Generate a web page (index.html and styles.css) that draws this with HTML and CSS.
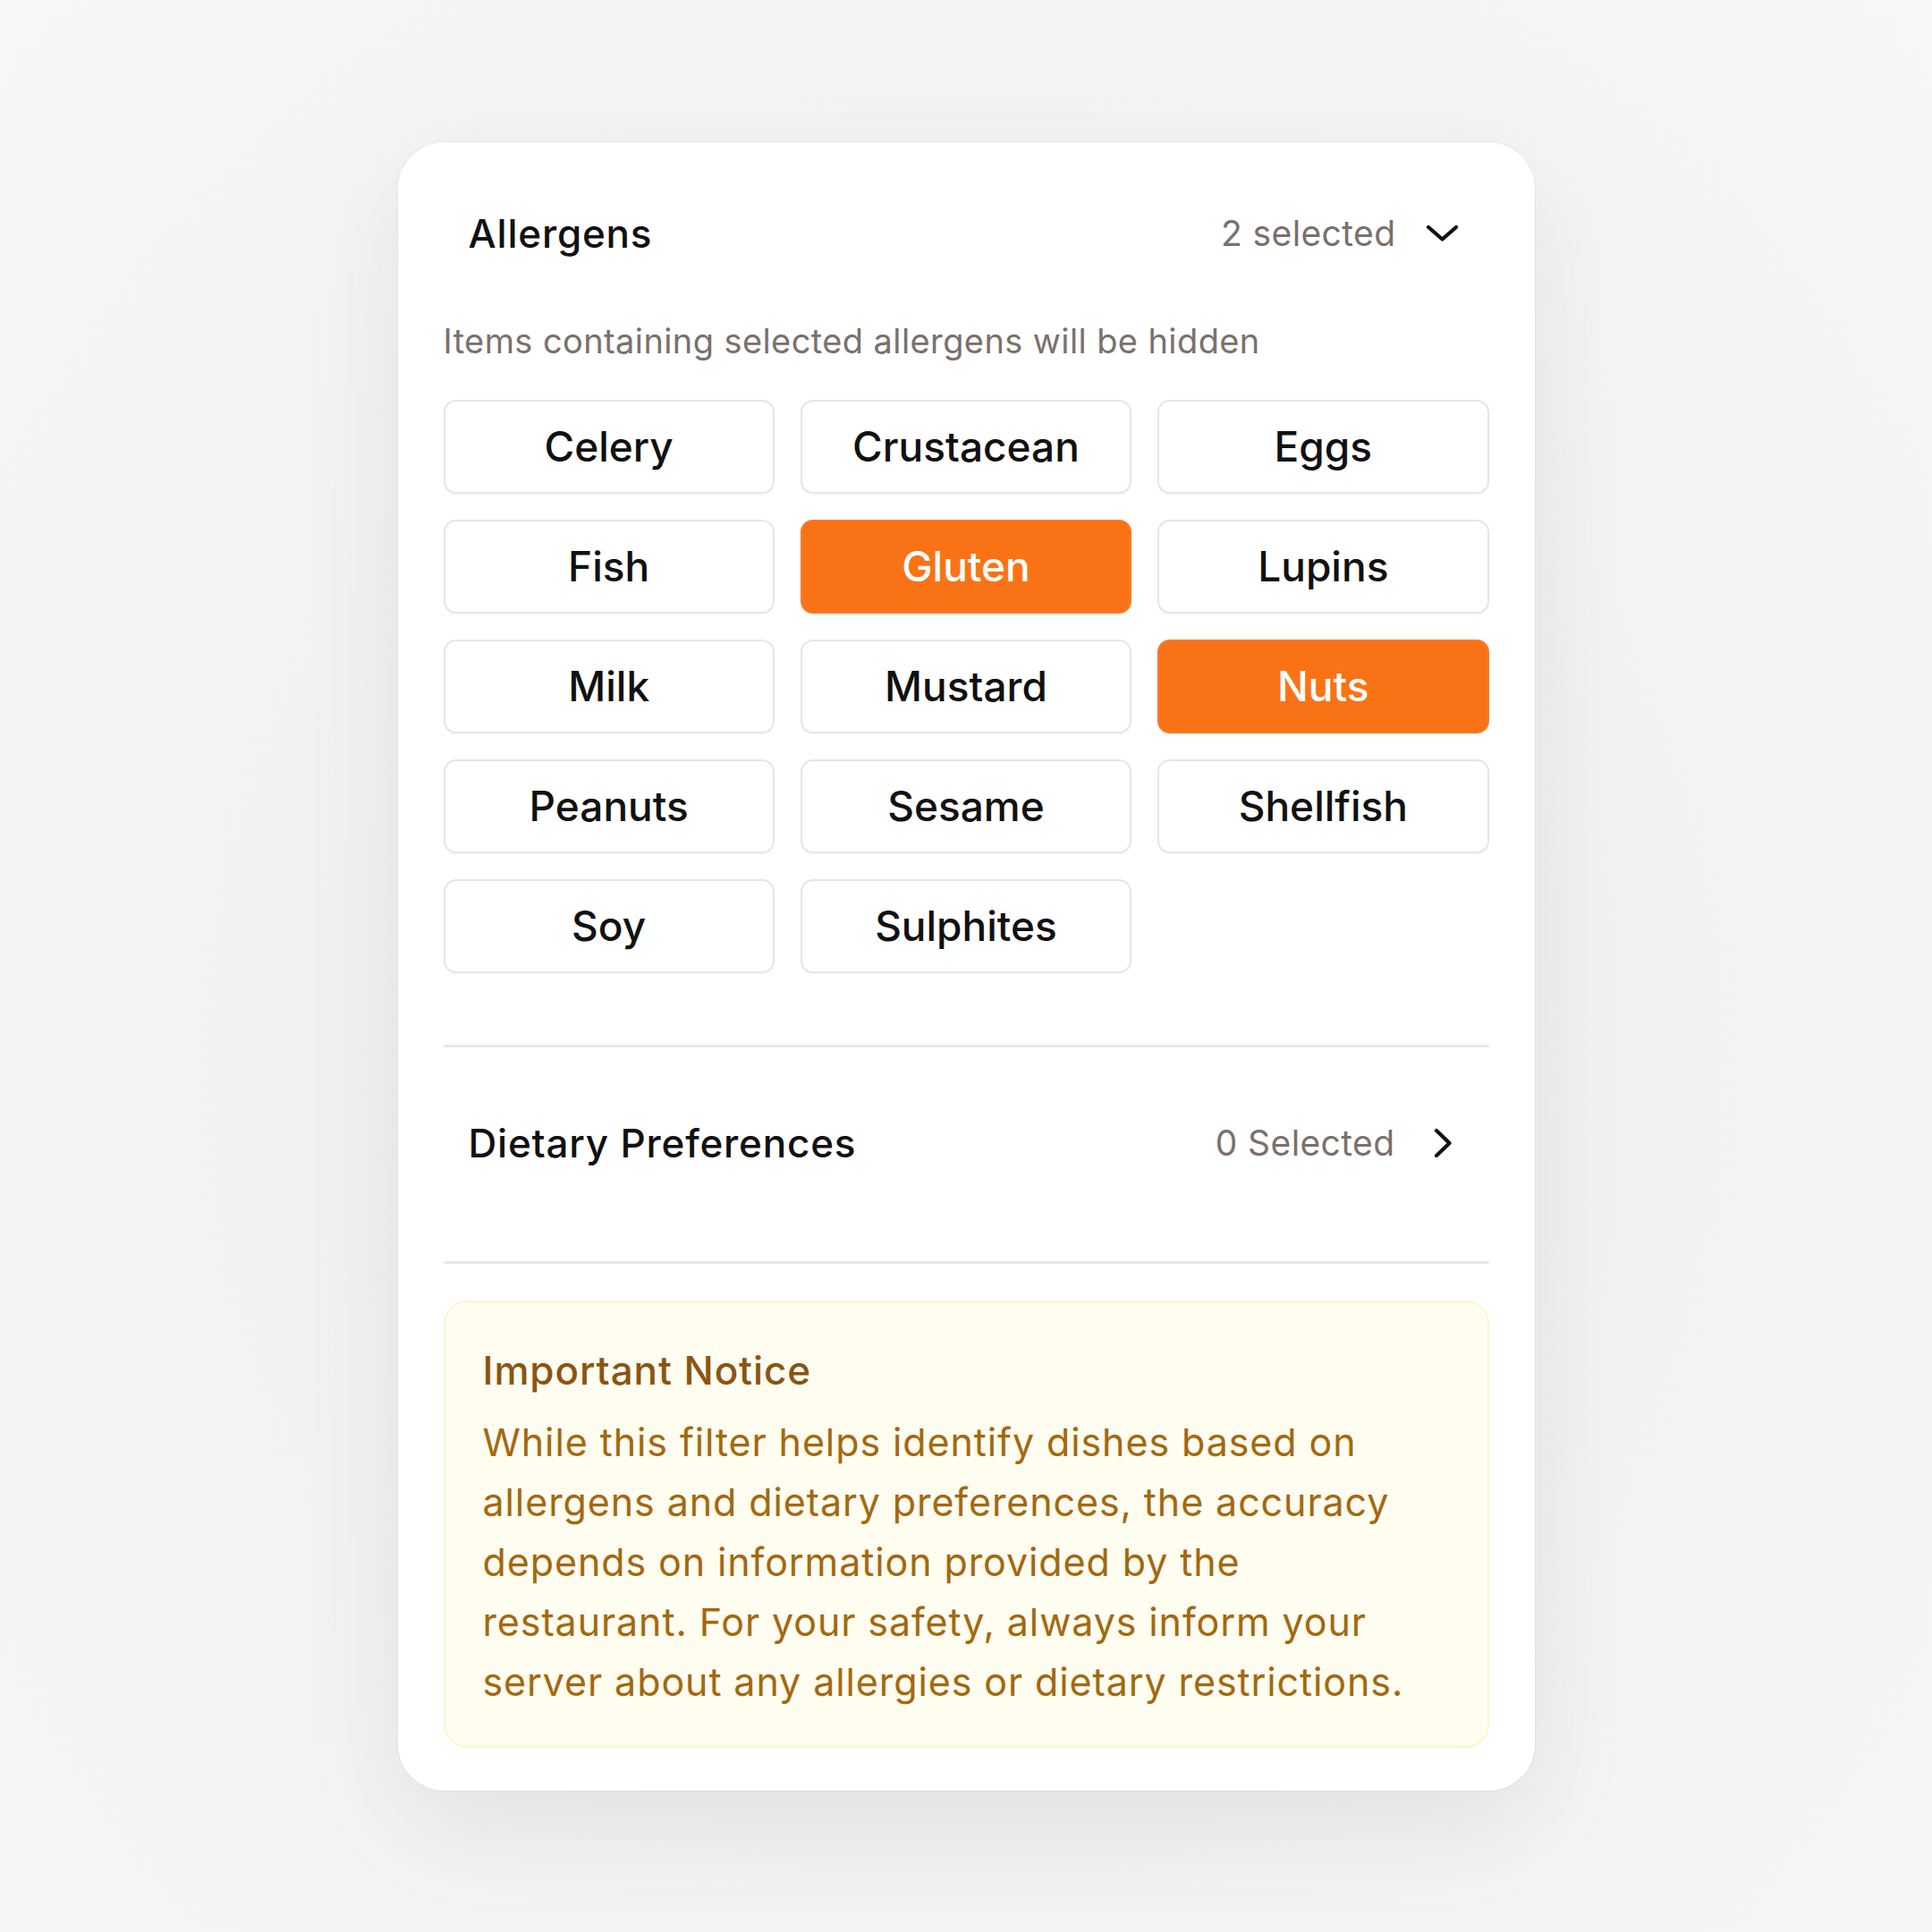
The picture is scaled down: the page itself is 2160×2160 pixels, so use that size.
FILE: index.html
```html
<!DOCTYPE html>
<html lang="en">
<head>
<meta charset="utf-8">
<title>Allergen Filter</title>
<link rel="stylesheet" href="styles.css">
</head>
<body>
  <main class="card">
    <header class="section-head">
      <h2 class="section-title">Allergens</h2>
      <div class="section-meta">
        <span class="meta-count">2 selected</span>
        <svg class="chev-down" width="40" height="24" viewBox="0 0 40 24" aria-hidden="true"><path d="M5 5 L20.5 18.5 L36 5" fill="none" stroke="#111" stroke-width="4.2" stroke-linecap="round" stroke-linejoin="round"/></svg>
      </div>
    </header>
    <p class="hint">Items containing selected allergens will be hidden</p>
    <div class="chip-grid">
      <button class="chip">Celery</button>
      <button class="chip">Crustacean</button>
      <button class="chip">Eggs</button>
      <button class="chip">Fish</button>
      <button class="chip chip-on">Gluten</button>
      <button class="chip">Lupins</button>
      <button class="chip">Milk</button>
      <button class="chip">Mustard</button>
      <button class="chip chip-on">Nuts</button>
      <button class="chip">Peanuts</button>
      <button class="chip">Sesame</button>
      <button class="chip">Shellfish</button>
      <button class="chip">Soy</button>
      <button class="chip">Sulphites</button>
    </div>
    <hr class="divider divider-top">
    <div class="section-head dietary">
      <h2 class="section-title">Dietary Preferences</h2>
      <div class="section-meta">
        <span class="meta-count">0 Selected</span>
        <svg class="chev-right" width="28" height="40" viewBox="0 0 28 40" aria-hidden="true"><path d="M7 6 L21.5 20 L7 34" fill="none" stroke="#111" stroke-width="4.2" stroke-linecap="round" stroke-linejoin="round"/></svg>
      </div>
    </div>
    <hr class="divider">
    <section class="notice">
      <h3 class="notice-title">Important Notice</h3>
      <p class="notice-text">While this filter helps identify dishes based on allergens and dietary preferences, the accuracy depends on information provided by the restaurant. For your safety, always inform your server about any allergies or dietary restrictions.</p>
    </section>
  </main>
</body>
</html>
```
FILE: styles.css
```css
* { box-sizing: border-box; }

html, body {
  margin: 0;
  padding: 0;
}

body {
  min-height: 100vh;
  display: flex;
  align-items: center;
  justify-content: center;
  background: radial-gradient(ellipse at 50% 55%, #ebebed 0%, #f1f1f3 45%, #f7f7f8 100%);
  font-family: Inter, "Noto Sans", "Liberation Sans", sans-serif;
  color: #111111;
}

.card {
  width: 1271px;
  background: #ffffff;
  border-radius: 52px;
  padding: 50px 51px 48px 51px;
  box-shadow: 0 0 0 1px rgba(0, 0, 0, 0.035), 0 40px 120px rgba(0, 0, 0, 0.07);
}

.section-head {
  display: flex;
  align-items: center;
  justify-content: space-between;
  height: 104px;
  padding: 0 33px 0 28px;
}

.section-title {
  margin: 0;
  font-size: 44px;
  font-weight: 500;
  line-height: 62px;
  letter-spacing: 0.8px;
  color: #111111;
}

.section-meta {
  display: flex;
  align-items: center;
  gap: 35px;
}

.meta-count {
  font-size: 39px;
  font-weight: 400;
  color: #78716c;
  line-height: 54px;
  letter-spacing: 0.4px;
}

.chev-down { display: block; margin-left: -4px; }
.chev-right { display: block; margin-left: 4px; margin-right: 5px; }

.hint {
  margin: 42px 0 0 0;
  font-size: 38px;
  line-height: 53px;
  letter-spacing: 0.4px;
  color: #78716c;
}

.chip-grid {
  margin-top: 39px;
  display: grid;
  grid-template-columns: repeat(3, 1fr);
  gap: 29px;
}

.chip {
  height: 105px;
  border: 2px solid #e6e6e6;
  border-radius: 14px;
  background: #ffffff;
  font-family: inherit;
  font-size: 46px;
  font-weight: 500;
  color: #111111;
  box-shadow: 0 2px 0 rgba(0, 0, 0, 0.025);
  padding: 0;
}

.chip-on {
  background: #f97316;
  border-color: #f9782a;
  color: #ffffff;
}

.divider {
  margin: 0;
  border: 0;
  height: 3px;
  background: #e8e8e8;
}

.divider-top { margin-top: 80px; }

.dietary {
  height: auto;
  padding-top: 76px;
  padding-bottom: 101px;
}

.notice {
  margin-top: 41px;
  background: #fefdf0;
  border: 2px solid #fcf6cc;
  border-radius: 26px;
  padding: 45px 66px 38px 42px;
}

.notice-title {
  margin: 0;
  font-size: 44px;
  font-weight: 500;
  line-height: 62px;
  letter-spacing: 0.9px;
  color: #8a5512;
}

.notice-text {
  margin: 16px 0 0 0;
  font-size: 43px;
  line-height: 67px;
  letter-spacing: 0.9px;
  color: #a4680f;
}
```
